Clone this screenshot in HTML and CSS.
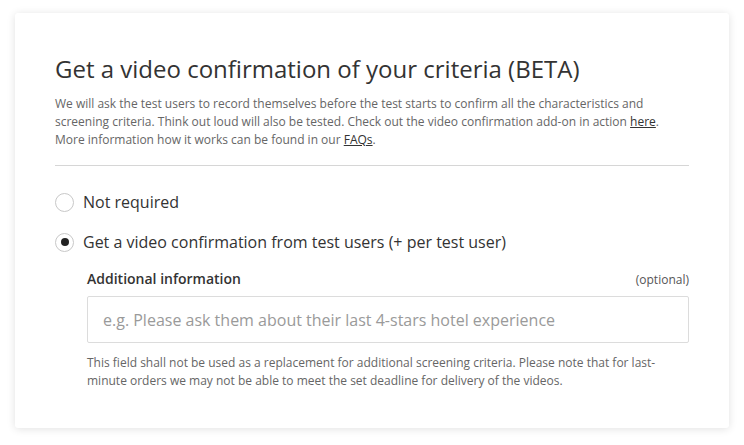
FILE: index.html
```html
<!DOCTYPE html>
<html>
<head>
<meta charset="utf-8">
<link rel="stylesheet" href="styles.css">
</head>
<body>
<div class="card">
  <h1 class="title">Get a video confirmation of your criteria (BETA)</h1>
  <p class="intro">We will ask the test users to record themselves before the test starts to confirm all the characteristics and screening criteria. Think out loud will also be tested. Check out the video confirmation add-on in action <a href="#">here</a>. More information how it works can be found in our <a href="#">FAQs</a>.</p>
  <div class="divider"></div>
  <div class="options">
    <label class="option"><span class="radio"></span><span class="option-text">Not required</span></label>
    <label class="option"><span class="radio checked"></span><span class="option-text">Get a video confirmation from test users (+ per test user)</span></label>
  </div>
  <div class="extra">
    <div class="field-head">
      <span class="field-label">Additional information</span>
      <span class="field-opt">(optional)</span>
    </div>
    <div class="input"><span class="placeholder">e.g. Please ask them about their last 4-stars hotel experience</span></div>
    <p class="help">This field shall not be used as a replacement for additional screening criteria. Please note that for last-minute orders we may not be able to meet the set deadline for delivery of the videos.</p>
  </div>
</div>
</body>
</html>
```

FILE: styles.css
```css
html, body {
  margin: 0;
  padding: 0;
  background: #ffffff;
}
body {
  padding: 13px 15px 17px 15px;
  font-family: "Open Sans", "DejaVu Sans", sans-serif;
  color: #333;
}
.card {
  background: #fff;
  border-radius: 3px;
  box-shadow: 0 1px 8px rgba(0, 0, 0, 0.12);
  padding: 40px 40px 38px 40px;
  height: 415px;
  box-sizing: border-box;
}
.title {
  margin: 0;
  font-size: 24px;
  font-weight: 400;
  line-height: 32px;
  color: #333;
}
.intro {
  margin: 10px 0 0 0;
  font-size: 12px;
  line-height: 18px;
  color: #666;
}
.intro a {
  color: #333;
  text-decoration: underline;
}
.divider {
  height: 1px;
  background: #d6d6d6;
  margin-top: 16px;
}
.options {
  display: flex;
  flex-direction: column;
  gap: 18px;
  margin-top: 25px;
}
.option {
  display: flex;
  align-items: center;
  gap: 9px;
  font-size: 16px;
  line-height: 22px;
  color: #333;
}
.radio {
  width: 19px;
  height: 19px;
  border: 1px solid #c8c8c8;
  border-radius: 50%;
  box-sizing: border-box;
  display: flex;
  align-items: center;
  justify-content: center;
}
.radio.checked::after {
  content: "";
  width: 8px;
  height: 8px;
  border-radius: 50%;
  background: #222;
}
.extra {
  margin-left: 32px;
  margin-top: 16px;
}
.field-head {
  display: flex;
  justify-content: space-between;
  align-items: baseline;
}
.field-label {
  font-size: 14px;
  font-weight: 600;
  color: #333;
}
.field-opt {
  font-size: 12px;
  color: #555;
}
.input {
  margin-top: 8px;
  height: 47px;
  box-sizing: border-box;
  border: 1px solid #dcdcdc;
  border-radius: 2px;
  display: flex;
  align-items: center;
  padding: 0 15px;
}
.placeholder {
  font-size: 16px;
  color: #9a9a9a;
}
.help {
  margin: 11px 0 0 0;
  font-size: 12px;
  line-height: 18px;
  color: #666;
}
```
